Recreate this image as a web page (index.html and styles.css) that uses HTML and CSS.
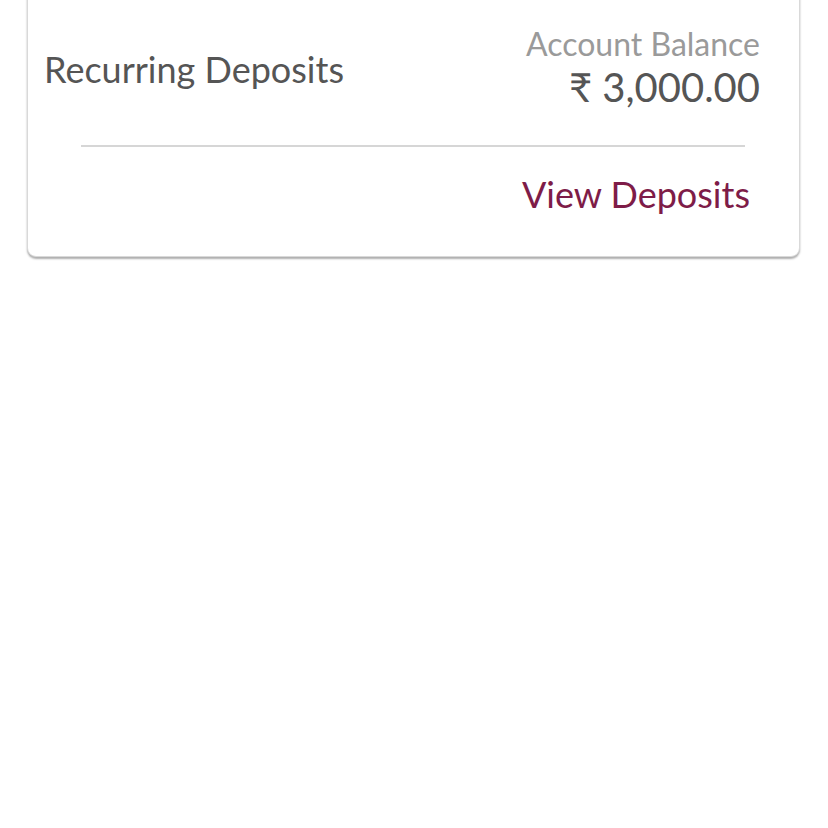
FILE: index.html
```html
<!DOCTYPE html>
<html>
<head>
<meta charset="utf-8">
<link rel="stylesheet" href="styles.css">
</head>
<body>
<div class="page">
  <div class="card">
    <div class="card-top">
      <div class="title">Recurring Deposits</div>
      <div class="balance">
        <div class="balance-label">Account Balance</div>
        <div class="balance-value">₹ 3,000.00</div>
      </div>
    </div>
    <div class="divider"></div>
    <div class="card-actions">
      <span class="link">View Deposits</span>
    </div>
  </div>
</div>
</body>
</html>
```
FILE: styles.css
```css
html, body {
  margin: 0;
  padding: 0;
  background: #ffffff;
}
body {
  font-family: Lato, "Open Sans", sans-serif;
  width: 828px;
  height: 828px;
  overflow: hidden;
}
.page {
  padding: 0 28px 0 27px;
}
.card {
  margin-top: -20px;
  background: #fff;
  border: 1px solid #d9d9d9;
  border-radius: 9px;
  box-shadow: 0 2px 2px rgba(0, 0, 0, 0.32);
  padding: 44px 39px 40px 16px;
}
.card-top {
  display: flex;
  justify-content: space-between;
  align-items: center;
}
.title {
  font-size: 36px;
  line-height: 44px;
  color: #555555;
}
.balance {
  text-align: right;
}
.balance-label {
  font-size: 32px;
  color: #9a9a9a;
  line-height: 38px;
}
.balance-value {
  font-size: 40px;
  color: #555555;
  line-height: 49px;
}
.divider {
  height: 1.5px;
  background: #d6d6d6;
  margin: 33px 15px 0 37px;
}
.card-actions {
  display: flex;
  justify-content: flex-end;
  padding-top: 25px;
  margin-right: 10px;
}
.link {
  font-size: 36px;
  color: #7e1c48;
  line-height: 44px;
}
```
